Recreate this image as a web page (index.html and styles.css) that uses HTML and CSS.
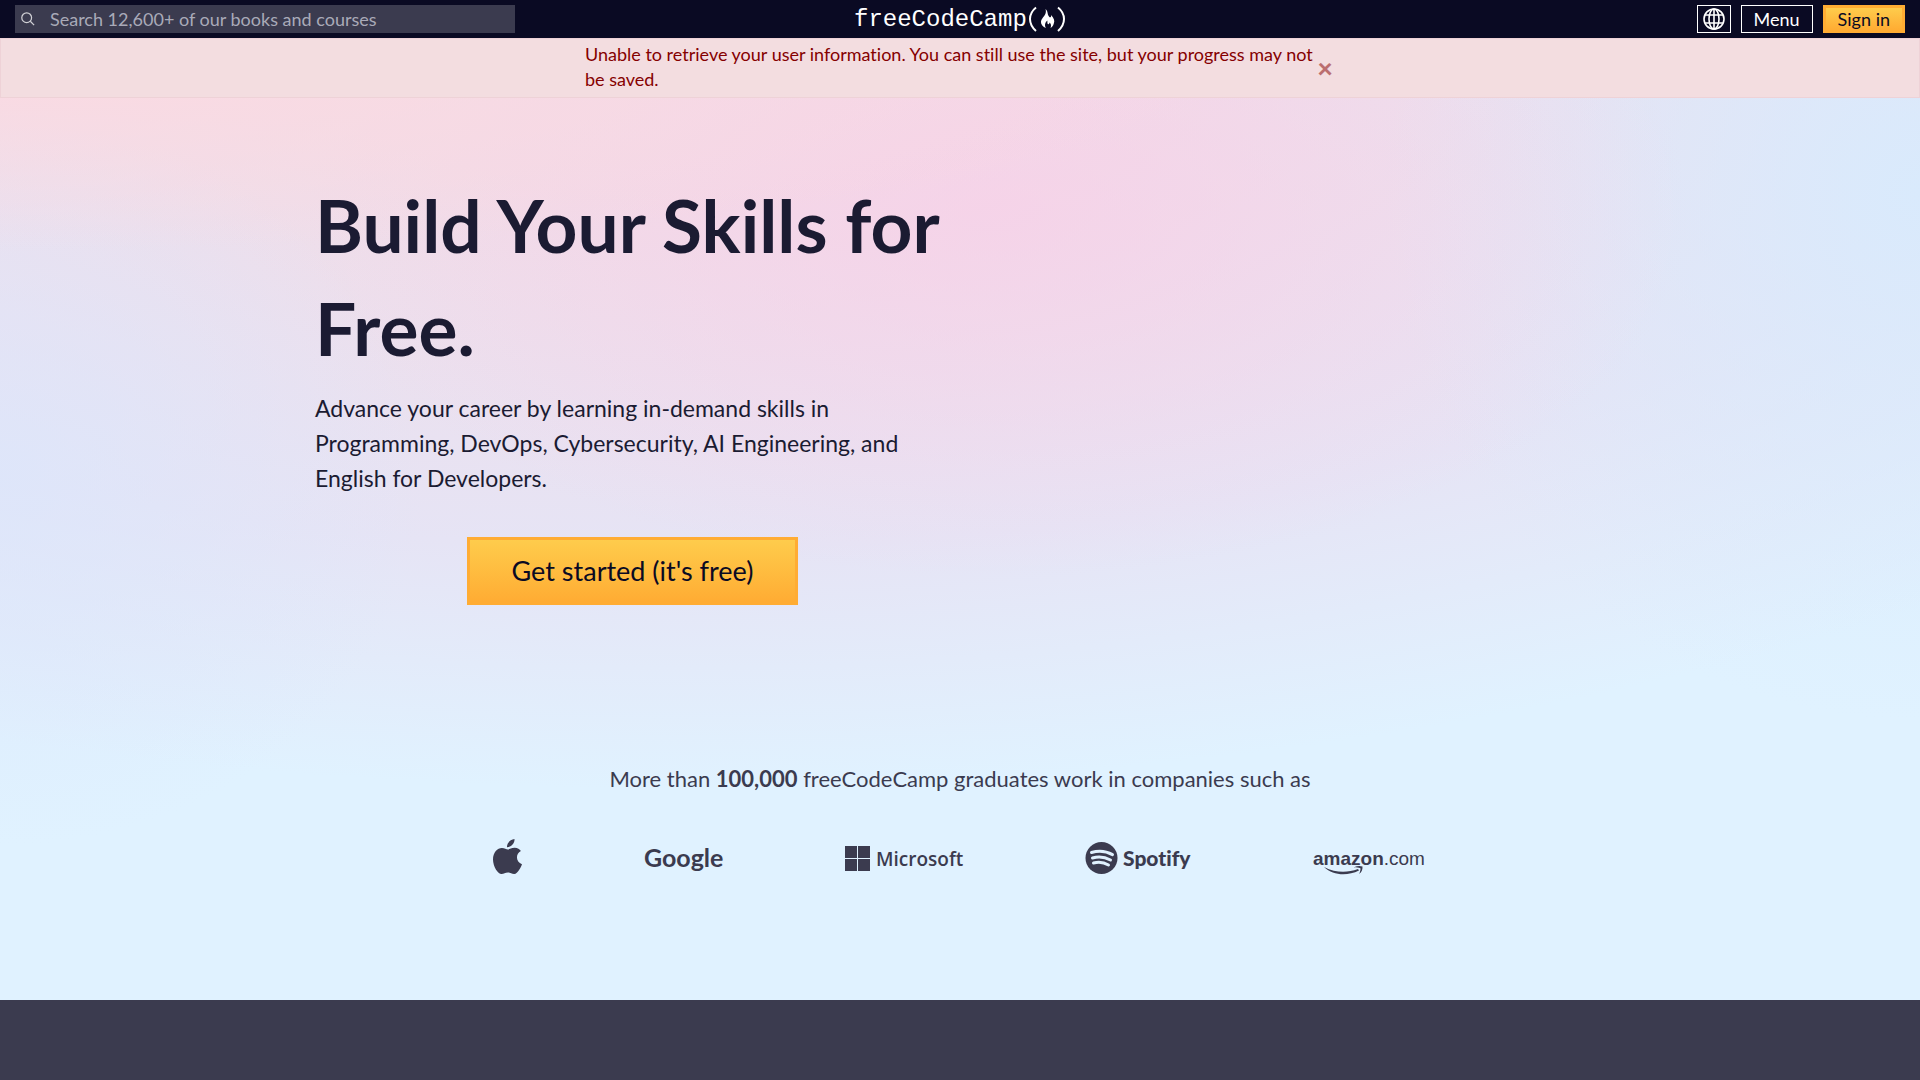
FILE: index.html
```
<!DOCTYPE html>
<html lang="en">
<head>
  <meta charset="UTF-8">
  <meta name="viewport" content="width=device-width, initial-scale=1.0">
  <title>freeCodeCamp.org</title>
  <link rel="stylesheet" href="styles.css">
</head>
<body>
  <header class="site-header">
    <form class="search" role="search">
      <svg class="search-icon" viewBox="0 0 16 16" aria-hidden="true">
        <circle cx="6.5" cy="6.5" r="5.6"/>
        <path d="M10.6 10.6L15 15"/>
      </svg>
      <input type="search" class="search-input" aria-label="Search" placeholder="Search 12,600+ of our books and courses">
    </form>

    <a class="logo" href="#" aria-label="freeCodeCamp home">
      <svg width="212" height="30" viewBox="0 0 212 30">
        <text class="logo-text" x="0" y="22">freeCodeCamp</text>
        <path class="logo-paren" d="M182 3.500C174 10 174 20 182 27M204 3.500C212 10 212 20 204 27"/>
        <path class="logo-flame" d="M191.500 5C194.500 8 193 10 195 12.500C196 14 197.500 13.500 197 11C200 14 201 17 199.800 19.500C199.300 21.500 198 23 196.500 24C197.500 21.500 197 19.500 195.500 18.500C195.500 20 194.500 20.500 193.800 20C193 19 193.800 17.500 193.200 16.500C191.500 18 190 21 192 24C189 23 186.800 20.500 187 17.500C187.500 13.500 193.500 11 191.500 5Z"/>
      </svg>
    </a>

    <nav class="header-nav">
      <button type="button" class="nav-btn globe-btn" aria-label="Change language">
        <svg width="22" height="22" viewBox="0 0 22 22">
          <circle cx="11" cy="11" r="10"/>
          <ellipse cx="11" cy="11" rx="5" ry="10"/>
          <path d="M11 1V21M2 7H20M2 15H20"/>
        </svg>
      </button>
      <button type="button" class="nav-btn">Menu</button>
      <a class="nav-btn signin-btn" href="#">Sign in</a>
    </nav>
  </header>

  <main class="landing">
    <div class="alert" role="alert">
      <p class="alert-text">Unable to retrieve your user information. You can still use the site, but your progress may not be saved.</p>
      <button type="button" class="alert-close" aria-label="Close">×</button>
    </div>

    <section class="hero">
      <div class="hero-content">
        <h1>Build Your Skills for Free.</h1>
        <p>Advance your career by learning in-demand skills in Programming, DevOps, Cybersecurity, AI Engineering, and English for Developers.</p>
        <a class="cta" href="#">Get started (it's free)</a>
      </div>
    </section>

    <section class="companies">
      <p>More than <strong>100,000</strong> freeCodeCamp graduates work in companies such as</p>
      <div class="company-logos">
        <svg width="29" height="36" viewBox="0 0 29 36" role="img" aria-label="Apple">
          <path d="M21.500 0C21.800 4.500 18 8.300 14 8.200C13.600 4.200 17.500 .3 21.500 0ZM14.700 10.500C16.500 10.500 18.500 8.700 21.800 8.800C24.500 9 26.700 10.200 27.900 12.100C22 15.500 23 23 29 25.200C28 28 24.800 34.800 21.300 35C18.700 35.100 17.800 33.500 15 33.500C12 33.500 11 35 8.500 35.100C5 35.200 0 27.500 0 20.500C0 13 4.500 9 8.900 8.900C11.500 8.900 13.500 10.500 14.700 10.500Z"/>
        </svg>
        <svg width="79" height="36" viewBox="0 0 79 36" role="img" aria-label="Google">
          <text class="google-text" x="0" y="28">Google</text>
        </svg>
        <svg width="118" height="36" viewBox="0 0 118 36" role="img" aria-label="Microsoft">
          <path d="M0 7H12V19H0ZM13 7H25V19H13ZM0 20H12V32H0ZM13 20H25V32H13Z"/>
          <text class="microsoft-text" x="31" y="27">Microsoft</text>
        </svg>
        <svg width="106" height="36" viewBox="0 0 106 36" role="img" aria-label="Spotify">
          <circle cx="16.500" cy="19" r="16"/>
          <path class="spotify-waves" d="M6.500 13.500C13 11.500 21.500 12.200 27.500 15.600M7.500 19C13.500 17.200 20 18 25.500 21M8.500 24C13.500 22.700 19 23.300 23.500 26"/>
          <text class="spotify-text" x="38" y="27">Spotify</text>
        </svg>
        <svg width="115" height="36" viewBox="0 0 115 36" role="img" aria-label="amazon.com">
          <text class="amazon-text" x="0" y="26"><tspan class="amazon-bold">amazon</tspan>.com</text>
          <path d="M11 28C23 34 34 34 45 30L46 31.500C34 37.500 20 36.500 11 28ZM41 28.300C44 26.800 47 26.700 49.500 27.500C49.700 30.500 48.700 33 46.200 35C47.200 32.500 47.700 30.500 47.400 29.300C45.500 28.500 43 28.700 41 28.300Z"/>
        </svg>
      </div>
    </section>
  </main>

  <section class="dark-section"></section>
</body>
</html>
```

FILE: styles.css
```
*, *::before, *::after {
  box-sizing: border-box;
  margin: 0;
  padding: 0;
}

body {
  display: flex;
  flex-direction: column;
  min-height: 100vh;
  font-family: Lato, sans-serif;
  font-size: 18px;
  font-variant-ligatures: none;
  color: #1b1b32;
}

/* Header */
.site-header {
  display: grid;
  grid-template-columns: 1fr auto 1fr;
  align-items: center;
  height: 38px;
  padding: 0 15px;
  background-color: #0a0a23;
}

.search {
  display: flex;
  align-items: center;
  width: 100%;
  max-width: 500px;
  height: 28px;
  padding-left: 6px;
  background-color: #3b3b4f;
}

.search-icon {
  width: 14px;
  height: 14px;
  fill: none;
  stroke: #d0d0d5;
  stroke-width: 1.4;
}

.search-input {
  flex: 1;
  height: 28px;
  padding: 0 15px;
  border: none;
  outline: none;
  background: transparent;
  color: #fff;
  font: inherit;
}

.search-input::placeholder {
  color: #a9aab8;
}

.logo {
  display: flex;
}

.logo-text {
  font-family: "Liberation Mono", monospace;
  font-size: 24px;
  fill: #fff;
}

.logo-paren {
  fill: none;
  stroke: #fff;
  stroke-width: 2;
}

.logo-flame {
  fill: #fff;
}

.header-nav {
  display: flex;
  justify-content: flex-end;
  gap: 10px;
}

.nav-btn {
  display: flex;
  align-items: center;
  justify-content: center;
  height: 28px;
  padding: 0 12px;
  border: 1px solid #fff;
  background-color: #0a0a23;
  color: #fff;
  font: inherit;
  text-decoration: none;
  cursor: pointer;
}

.globe-btn {
  padding: 0 5px;
}

.globe-btn svg {
  fill: none;
  stroke: #fff;
  stroke-width: 1.6;
}

.signin-btn {
  border: 3px solid #ffac33;
  background-image: linear-gradient(#fecc4c, #ffac33);
  color: #0a0a23;
}

/* Landing top */
.landing {
  background-color: #e0f2ff;
  background-image:
    radial-gradient(ellipse 60% 18% at 4% 4%, #fadae2, #fadae200),
    radial-gradient(ellipse 36% 38% at 52% 18%, #f8cfe8b3, #f8cfe800),
    radial-gradient(ellipse 22% 38% at 0 46%, #dce6fbcc, #dce6fb00),
    radial-gradient(ellipse 28% 55% at 100% 16%, #d9eafc, #d9eafc00),
    radial-gradient(ellipse 100% 78% at 35% 0, #f1dce7 20%, #e6e4f5 68%, #e0f2ff00);
}

.alert {
  display: flex;
  align-items: center;
  justify-content: center;
  padding: 3px 15px 5px;
  border: 1px solid #ebccd199;
  background-color: #f3dde0;
  color: #850000;
}

.alert-text {
  max-width: 730px;
  line-height: 25px;
}

.alert-close {
  width: 20px;
  border: none;
  background: none;
  color: #850000;
  font-family: Lato, sans-serif;
  font-size: 27px;
  font-weight: 900;
  line-height: 27px;
  opacity: 0.5;
  cursor: pointer;
}

.hero {
  display: grid;
  grid-template-columns: 1fr 1fr;
  gap: 20px;
  max-width: 1320px;
  margin: 0 auto;
  padding: 76px 15px 0;
}

.hero h1 {
  font-size: 73px;
  font-weight: 700;
  line-height: 103px;
}

.hero p {
  max-width: 610px;
  margin: 11px 0 41px;
  font-size: 23px;
  line-height: 35px;
}

.cta {
  display: block;
  width: fit-content;
  margin: 0 auto;
  padding: 10px 42px;
  border: 3px solid #ffac33;
  background-image: linear-gradient(#fecc4c, #ffac33);
  color: #0a0a23;
  font-size: 27px;
  line-height: 42px;
  text-decoration: none;
}

.companies {
  padding: 157px 15px 125px;
  color: #3b3b4f;
  text-align: center;
}

.companies p {
  font-size: 22px;
  line-height: 34px;
}

.company-logos {
  display: flex;
  flex-wrap: wrap;
  justify-content: center;
  gap: 30px 122px;
  margin-top: 43px;
  fill: #3b3b4f;
}

.company-logos svg {
  overflow: visible;
}

.google-text {
  font-family: Lato, sans-serif;
  font-size: 25px;
  font-weight: 700;
}

.microsoft-text {
  font-family: "Open Sans", sans-serif;
  font-size: 19px;
  font-weight: 600;
}

.spotify-text {
  font-family: Lato, sans-serif;
  font-size: 21px;
  font-weight: 900;
}

.spotify-waves {
  fill: none;
  stroke: #e0f1fe;
  stroke-width: 3;
  stroke-linecap: round;
}

.amazon-text {
  font-family: "Liberation Sans Narrow", "Liberation Sans", sans-serif;
  font-size: 19px;
}

.amazon-bold {
  font-weight: 700;
}

.dark-section {
  flex: 1;
  min-height: 80px;
  background-color: #3b3b4f;
}

@media (max-width: 980px) {
  .site-header {
    grid-template-columns: auto 1fr;
  }

  .search {
    display: none;
  }

  .hero {
    grid-template-columns: 1fr;
  }
}
```
